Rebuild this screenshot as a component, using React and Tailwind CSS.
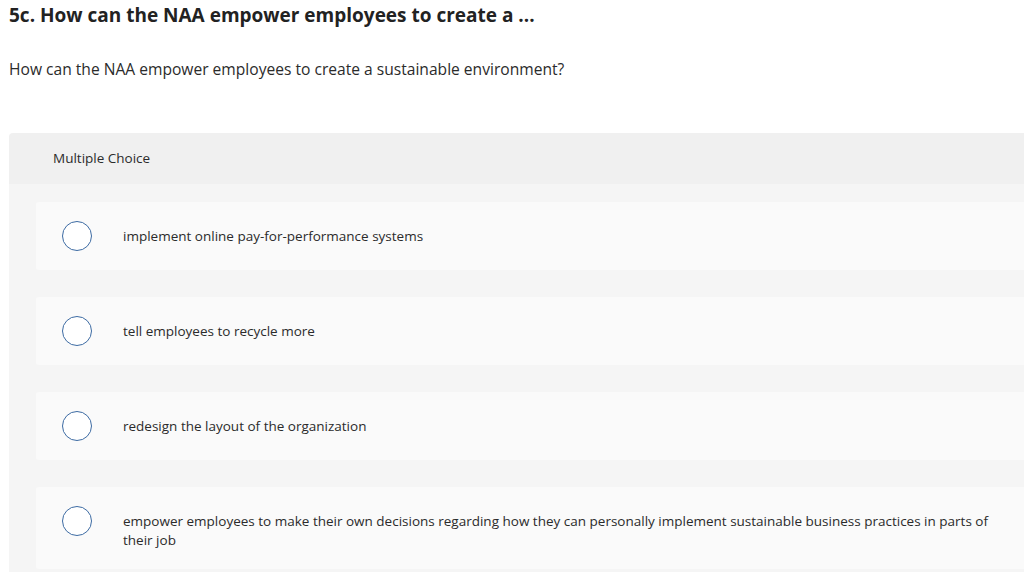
import React from 'react';

const options = [
  'implement online pay-for-performance systems',
  'tell employees to recycle more',
  'redesign the layout of the organization',
  'empower employees to make their own decisions regarding how they can personally implement sustainable business practices in parts of their job',
];

export default function App() {
  return (
    <div className="w-[1024px] h-[572px] overflow-hidden bg-white text-[#2b2b2b]" style={{ fontFamily: '"Open Sans", sans-serif' }}>
      {/* question title */}
      <h2 className="px-[9px] pt-[3px] text-[19px] leading-[24px] font-bold text-[#222]">
        5c. How can the NAA empower employees to create a ...
      </h2>
      <p className="px-[9px] mt-[32px] text-[15.6px] leading-[20px]">
        How can the NAA empower employees to create a sustainable environment?
      </p>

      {/* answer panel */}
      <div className="ml-[9px] mt-[54px] w-[1040px] rounded-tl-[4px] overflow-hidden">
        <div className="h-[51px] bg-[#f0f0f0] pl-[44px] flex items-center text-[13.5px]">
          Multiple Choice
        </div>
        <div className="bg-[#f5f5f5] pl-[27px] pt-[18px] pb-[20px] flex flex-col gap-[27px]">
          {options.map((opt, i) => (
            <div key={i} className="bg-[#fafafa] rounded-l-[3px] flex items-start pl-[26px] py-[19px]">
              <span className="w-[30px] h-[30px] shrink-0 rounded-full border-[1.5px] border-[#3d6ba3] bg-white" />
              <span className="ml-[31px] mt-[6px] w-[880px] text-[13.5px] leading-[19px]">{opt}</span>
            </div>
          ))}
        </div>
      </div>
    </div>
  );
}
